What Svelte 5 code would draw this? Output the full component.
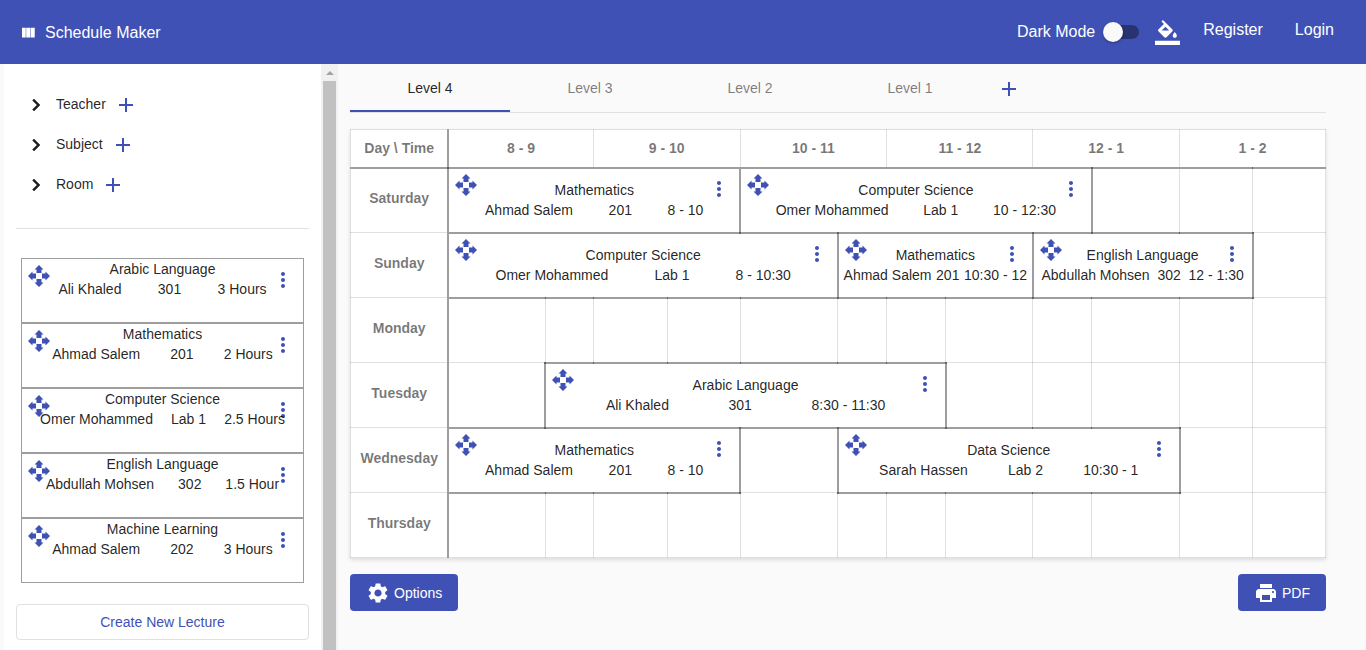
<script>
  const groups = ['Teacher', 'Subject', 'Room'];

  const lectures = [
    { title: 'Arabic Language', teacher: 'Ali Khaled', room: '301', time: '3 Hours' },
    { title: 'Mathematics', teacher: 'Ahmad Salem', room: '201', time: '2 Hours' },
    { title: 'Computer Science', teacher: 'Omer Mohammed', room: 'Lab 1', time: '2.5 Hours' },
    { title: 'English Language', teacher: 'Abdullah Mohsen', room: '302', time: '1.5 Hour' },
    { title: 'Machine Learning', teacher: 'Ahmad Salem', room: '202', time: '3 Hours' }
  ];

  const levels = ['Level 4', 'Level 3', 'Level 2', 'Level 1'];
  let active = $state('Level 4');
  let dark = $state(false);

  const hours = ['8 - 9', '9 - 10', '10 - 11', '11 - 12', '12 - 1', '1 - 2'];

  // Relative widths of the day column and of the time slots
  const slots = [98, 97, 48, 74, 73, 98, 49, 59, 87, 59, 88, 73, 73];
  const total = slots.reduce((a, b) => a + b, 0);

  const item = (span, title, teacher, room, time) => ({ span, title, teacher, room, time });
  const free = (n) => Array.from({ length: n }, () => ({ span: 1 }));

  const days = [
    { name: 'Saturday', cells: [
      item(4, 'Mathematics', 'Ahmad Salem', '201', '8 - 10'),
      item(5, 'Computer Science', 'Omer Mohammed', 'Lab 1', '10 - 12:30'),
      ...free(3)
    ] },
    { name: 'Sunday', cells: [
      item(5, 'Computer Science', 'Omer Mohammed', 'Lab 1', '8 - 10:30'),
      item(3, 'Mathematics', 'Ahmad Salem', '201', '10:30 - 12'),
      item(3, 'English Language', 'Abdullah Mohsen', '302', '12 - 1:30'),
      ...free(1)
    ] },
    { name: 'Monday', cells: free(12) },
    { name: 'Tuesday', cells: [
      ...free(1),
      item(6, 'Arabic Language', 'Ali Khaled', '301', '8:30 - 11:30'),
      ...free(5)
    ] },
    { name: 'Wednesday', cells: [
      item(4, 'Mathematics', 'Ahmad Salem', '201', '8 - 10'),
      ...free(1),
      item(5, 'Data Science', 'Sarah Hassen', 'Lab 2', '10:30 - 1'),
      ...free(2)
    ] },
    { name: 'Thursday', cells: free(12) }
  ];
</script>

{#snippet icon(path, size = 24)}
  <svg width={size} height={size} viewBox="0 0 24 24" fill="currentColor" aria-hidden="true"><path d={path} /></svg>
{/snippet}

{#snippet plus()}
  {@render icon('M19 13h-6v6h-2v-6H5v-2h6V5h2v6h6v2z')}
{/snippet}

{#snippet lecture(l)}
  <button class="icon-btn move" aria-label="Move lecture">
    {@render icon('M12 1l4.5 4.5h-2V9h-5V5.5h-2zM12 23l-4.5-4.5h2V15h5v3.5h2zM1 12l4.5-4.5v2H9v5H5.5v2zM23 12l-4.5 4.5v-2H15v-5h3.5v-2z')}
  </button>
  <button class="icon-btn more" aria-label="Lecture menu">
    {@render icon('M12 8c1.1 0 2-.9 2-2s-.9-2-2-2-2 .9-2 2 .9 2 2 2zm0 2c-1.1 0-2 .9-2 2s.9 2 2 2 2-.9 2-2-.9-2-2-2zm0 6c-1.1 0-2 .9-2 2s.9 2 2 2 2-.9 2-2-.9-2-2-2z')}
  </button>
  <div class="title">{l.title}</div>
  <div class="info"><span>{l.teacher}</span><span>{l.room}</span><span>{l.time}</span></div>
{/snippet}

<div class="page">
  <header>
    <a class="brand" href="#home">
      {@render icon('M9.6 18h5.2V5H9.6v13zM4 18h5V5H4v13zM15.4 5v13H21V5h-5.6z', 18)}
      <span>Schedule Maker</span>
    </a>
    <nav>
      <label class="dark">
        <span>Dark Mode</span>
        <input type="checkbox" role="switch" bind:checked={dark} />
      </label>
      <button class="icon-btn fill" aria-label="Theme colour">
        {@render icon('M16.56 8.94L7.62 0 6.21 1.41l2.38 2.38-5.15 5.15c-.59.59-.59 1.54 0 2.12l5.5 5.5c.29.29.68.44 1.06.44s.77-.15 1.06-.44l5.5-5.5c.59-.58.59-1.53 0-2.12zM6.4 10L10 6.4 13.6 10H6.4zM19 11.5s-2 2.17-2 3.5c0 1.1.9 2 2 2s2-.9 2-2c0-1.33-2-3.5-2-3.5zM0 20h24v4H0z', 25)}
      </button>
      <a href="#register">Register</a>
      <a href="#login">Login</a>
    </nav>
  </header>

  <div class="body">
    <aside>
      <div class="panel">
        <ul class="tree">
          {#each groups as g}
            <li>
              <button class="icon-btn chevron" aria-label="Expand {g}">
                {@render icon('M10 6L8.59 7.41 13.17 12l-4.58 4.59L10 18l6-6z')}
              </button>
              <span>{g}</span>
              <button class="icon-btn" aria-label="Add {g}">{@render plus()}</button>
            </li>
          {/each}
        </ul>
        <hr />
        <div class="cards">
          {#each lectures as l}
            <div class="card">{@render lecture(l)}</div>
          {/each}
        </div>
        <button class="create">Create New Lecture</button>
      </div>
      <div class="scrollbar">
        <div class="arrow"></div>
        <div class="thumb"></div>
      </div>
    </aside>

    <main>
      <div class="tabs" role="tablist">
        {#each levels as l}
          <button class="tab" role="tab" class:active={active === l} aria-selected={active === l} onclick={() => (active = l)}>{l}</button>
        {/each}
        <button class="icon-btn add" aria-label="Add level">{@render plus()}</button>
      </div>

      <table>
        <colgroup>
          {#each slots as s}<col style="width: {(s / total) * 100}%" />{/each}
        </colgroup>
        <thead>
          <tr>
            <th class="day">Day \ Time</th>
            {#each hours as h}<th colspan="2">{h}</th>{/each}
          </tr>
        </thead>
        <tbody>
          {#each days as d}
            <tr>
              <th class="day" scope="row">{d.name}</th>
              {#each d.cells as c}
                <td colspan={c.span} class:busy={c.title}>
                  {#if c.title}<div class="slot">{@render lecture(c)}</div>{/if}
                </td>
              {/each}
            </tr>
          {/each}
        </tbody>
      </table>

      <div class="actions">
        <button class="solid">
          {@render icon('M19.14 12.94c.04-.3.06-.61.06-.94 0-.32-.02-.64-.07-.94l2.03-1.58c.18-.14.23-.41.12-.61l-1.92-3.32c-.12-.22-.37-.29-.59-.22l-2.39.96c-.5-.38-1.03-.7-1.62-.94l-.36-2.54c-.04-.24-.24-.41-.48-.41h-3.84c-.24 0-.43.17-.47.41l-.36 2.54c-.59.24-1.13.57-1.62.94l-2.39-.96c-.22-.08-.47 0-.59.22L2.74 8.87c-.12.21-.08.47.12.61l2.03 1.58c-.05.3-.09.63-.09.94s.02.64.07.94l-2.03 1.58c-.18.14-.23.41-.12.61l1.92 3.32c.12.22.37.29.59.22l2.39-.96c.5.38 1.03.7 1.62.94l.36 2.54c.05.24.24.41.48.41h3.84c.24 0 .44-.17.47-.41l.36-2.54c.59-.24 1.13-.56 1.62-.94l2.39.96c.22.08.47 0 .59-.22l1.92-3.32c.12-.22.07-.47-.12-.61l-2.01-1.58zM12 15.6c-1.98 0-3.6-1.62-3.6-3.6s1.62-3.6 3.6-3.6 3.6 1.62 3.6 3.6-1.62 3.6-3.6 3.6z')}
          <span>Options</span>
        </button>
        <button class="solid">
          {@render icon('M19 8H5c-1.66 0-3 1.34-3 3v6h4v4h12v-4h4v-6c0-1.66-1.34-3-3-3zm-3 11H8v-5h8v5zm3-7c-.55 0-1-.45-1-1s.45-1 1-1 1 .45 1 1-.45 1-1 1zm-1-9H6v4h12V3z')}
          <span>PDF</span>
        </button>
      </div>
    </main>
  </div>
</div>

<style>
  :global(body) { background: #fafafa; }
  .page {
    --primary: #3f51b5;
    --light: rgba(0, 0, 0, 0.12);
    --strong: rgba(0, 0, 0, 0.38);
    min-height: 100vh;
    font: 14px/20px "Liberation Sans", Arial, sans-serif;
    color: rgba(0, 0, 0, 0.87);
  }
  button { font: inherit; cursor: pointer; }
  svg { display: block; flex: none; }
  .icon-btn {
    display: block;
    padding: 0;
    border: 0;
    background: none;
    color: var(--primary);
  }

  header {
    display: flex;
    align-items: center;
    justify-content: space-between;
    height: 64px;
    padding: 0 32px 0 19px;
    background: var(--primary);
    color: #fff;
    font-size: 16px;
  }
  header a { color: #fff; text-decoration: none; }
  .brand { display: flex; align-items: center; gap: 8px; padding-top: 2px; }
  nav { display: flex; align-items: center; }
  nav > a { margin: 0 0 4px 32px; }
  nav > .fill + a { margin-left: 23px; }
  .dark { display: flex; align-items: center; gap: 8px; }
  .dark input {
    appearance: none;
    position: relative;
    width: 36px;
    height: 14px;
    margin: 0;
    border-radius: 7px;
    background: #28336f;
  }
  .dark input::before {
    content: "";
    position: absolute;
    top: -3px;
    left: 0;
    width: 20px;
    height: 20px;
    border-radius: 50%;
    background: #fafafa;
    box-shadow: 0 1px 3px rgba(0, 0, 0, 0.3);
  }
  .dark input:checked::before { left: 16px; }
  .fill { margin-left: 16px; color: #fff; }

  .body { display: flex; align-items: stretch; min-height: calc(100vh - 64px); }
  aside { display: flex; flex: none; width: 334px; margin-left: 4px; background: #fff; }
  .panel { flex: 1; padding: 20px 12px 10px; }
  .tree { margin: 0 0 24px; padding: 0; list-style: none; }
  .tree li { display: flex; align-items: center; gap: 8px; height: 40px; padding-left: 8px; }
  .tree .icon-btn { padding-top: 2px; }
  .tree .chevron { color: rgba(0, 0, 0, 0.87); }
  .chevron :global(path) { stroke: currentColor; stroke-width: 0.5; }
  hr { margin: 0 0 29px; border: 0; border-top: 1px solid #e0e0e0; }
  .cards { margin: 0 5px 21px; }
  .card {
    position: relative;
    box-sizing: border-box;
    height: 65px;
    border: 1px solid #9e9e9e;
  }
  .title { position: relative; text-align: center; pointer-events: none; }
  .info {
    position: relative;
    display: flex;
    justify-content: space-evenly;
    white-space: nowrap;
    pointer-events: none;
  }
  .move { position: absolute; top: 5px; left: 5px; }
  .more { position: absolute; top: 9px; right: 8px; }
  .slot .move { top: 4px; }
  .slot .more { top: 8px; }
  .create {
    display: block;
    width: 100%;
    height: 36px;
    border: 1px solid #e0e0e0;
    border-radius: 4px;
    background: #fff;
    color: var(--primary);
  }
  .scrollbar {
    display: flex;
    flex-direction: column;
    align-items: center;
    width: 17px;
    background: #f1f1f1;
  }
  .arrow {
    margin: 7px 0 6px;
    border: 4px solid transparent;
    border-top-width: 0;
    border-bottom-color: #a3a3a3;
  }
  .thumb { flex: 1; width: 13px; background: #c1c1c1; }

  main { flex: 1; min-width: 0; padding: 0 40px 0 12px; }
  .tabs { display: flex; align-items: center; height: 48px; border-bottom: 1px solid #e0e0e0; }
  .tab {
    width: 160px;
    height: 48px;
    padding: 0;
    border: 0;
    background: none;
    color: rgba(0, 0, 0, 0.52);
  }
  .tab.active { color: rgba(0, 0, 0, 0.87); box-shadow: inset 0 -2px var(--primary); }
  .add { margin: 2px 0 0 7px; }

  table {
    width: 100%;
    margin-top: 16px;
    border-collapse: collapse;
    table-layout: fixed;
    background: #fff;
    box-shadow: 0 2px 4px rgba(0, 0, 0, 0.12);
  }
  th, td { padding: 0; border: 1px solid var(--light); }
  thead tr { height: 38px; }
  tbody tr { height: 65px; }
  th { color: rgba(0, 0, 0, 0.54); }
  thead th { border-bottom: 2px solid var(--strong); }
  th.day { border-right: 2px solid var(--strong); }
  tbody th { padding-bottom: 4px; }
  td.busy { border: 2px solid var(--strong); }
  .slot { position: relative; padding: 11px 0; }

  .actions { display: flex; justify-content: space-between; margin-top: 16px; }
  .solid {
    display: flex;
    align-items: center;
    gap: 4px;
    height: 37px;
    padding: 0 16px;
    border: 0;
    border-radius: 4px;
    background: var(--primary);
    color: #fff;
  }
</style>
